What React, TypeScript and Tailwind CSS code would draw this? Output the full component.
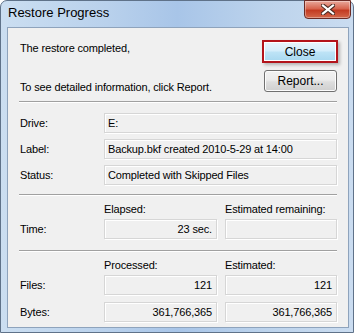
import type { ReactNode } from "react";

function Field({ children, right }: { children?: ReactNode; right?: boolean }) {
  return (
    <div
      className={
        right
          ? "flex h-[20px] items-center justify-end border border-[#d6d6d6] bg-[#f0f0f0] px-[4px] shadow-[inset_1px_1px_0_#ffffff,1px_1px_0_#ffffff] text-black"
          : "flex h-[20px] items-center border border-[#d6d6d6] bg-[#f0f0f0] px-[3px] shadow-[inset_1px_1px_0_#ffffff,1px_1px_0_#ffffff] text-black"
      }
    >
      {children}
    </div>
  );
}

function Separator() {
  return <div className="-ml-[1px] h-[2px] border-t border-b border-t-[#a0a0a0] border-b-white" />;
}

export default function App() {
  return (
    <div className="h-[333px] w-[354px] overflow-hidden bg-white font-['Liberation_Sans',Arial,sans-serif]">
      <div className="flex h-[333px] w-[354px] flex-col rounded-t-[7px] border border-[#5f7289] bg-[linear-gradient(to_right,#cbdef1,#b9d1ec_30%,#a8c5e8_50%,#bcd3ec_75%,#cadcf0)]">
        {/* title bar */}
        <div className="flex h-[26px] items-start justify-between">
          <span className="pl-[7px] pt-[4px] text-[13px] leading-[16px] text-black">Restore Progress</span>
          <div className="mr-[2px] -mt-[1px] flex h-[19px] w-[47px] items-center justify-center rounded-b-[4px] border border-[#6b2b25] bg-[linear-gradient(to_bottom,#e9a99c,#d7654f_45%,#c33b22_55%,#d3674a)] shadow-[inset_0_0_0_1px_rgba(255,255,255,0.35)]">
            <svg width="14" height="11" viewBox="0 0 14 11">
              <path d="M2 1.5 L12 9.5 M12 1.5 L2 9.5" stroke="#4a2a22" strokeWidth="4.2" strokeLinecap="square" />
              <path d="M2 1.5 L12 9.5 M12 1.5 L2 9.5" stroke="#ffffff" strokeWidth="2.2" strokeLinecap="square" />
            </svg>
          </div>
        </div>

        {/* client */}
        <div className="ml-[6px] h-[301px] w-[342px] border border-[#8ea3bc] bg-[#f0f0f0] pl-[12px] pr-[11px] pt-[12px] text-[11px] leading-[14px] tracking-[-0.15px] text-black">
          <div className="flex h-[61px] justify-between">
            <div className="flex flex-col">
              <span className="mt-[1px]">The restore completed,</span>
              <span className="mt-[25px]">To see detailed information, click Report.</span>
            </div>
            <div className="flex w-[75px] flex-col items-end tracking-normal">
              <div className="-mr-[1px] flex h-[23px] w-[76px] items-center justify-center border-2 border-[#b3141b] bg-[linear-gradient(to_bottom,#e9f5fc,#d6eefb_45%,#bde3f6_55%,#a8d8f0)] shadow-[inset_0_0_0_1px_#ffffff,2px_2px_3px_rgba(0,0,0,0.25)] text-[12px]">
                Close
              </div>
              <div className="mt-[7px] flex h-[22px] w-[73px] items-center justify-center rounded-[3px] border border-[#707070] bg-[linear-gradient(to_bottom,#f2f2f2,#ebebeb_45%,#dddddd_55%,#cfcfcf)] shadow-[inset_0_0_0_1px_#fcfcfc] text-[12px]">
                Report...
              </div>
            </div>
          </div>

          <Separator />

          <div className="mt-[10px] flex flex-col gap-[6px]">
            {[
              ["Drive:", "E:"],
              ["Label:", "Backup.bkf created 2010-5-29 at 14:00"],
              ["Status:", "Completed with Skipped Files"],
            ].map(([label, value]) => (
              <div key={label} className="grid grid-cols-[84px_1fr] items-center">
                <span>{label}</span>
                <Field>{value}</Field>
              </div>
            ))}
          </div>

          <div className="mt-[9px]">
            <Separator />
          </div>

          <div className="mt-[6px] grid h-[14px] grid-cols-[76px_113px_112px] gap-x-[8px]">
            <span />
            <span>Elapsed:</span>
            <span>Estimated remaining:</span>
          </div>
          <div className="mt-[3px] grid grid-cols-[76px_113px_112px] items-center gap-x-[8px]">
            <span>Time:</span>
            <Field right>23 sec.</Field>
            <Field right />
          </div>

          <div className="mt-[11px]">
            <Separator />
          </div>

          <div className="mt-[6px] grid h-[14px] grid-cols-[76px_113px_112px] gap-x-[8px]">
            <span />
            <span>Processed:</span>
            <span>Estimated:</span>
          </div>
          <div className="mt-[3px] flex flex-col gap-[7px]">
            {[
              ["Files:", "121", "121"],
              ["Bytes:", "361,766,365", "361,766,365"],
            ].map(([label, a, b]) => (
              <div key={label} className="grid grid-cols-[76px_113px_112px] items-center gap-x-[8px]">
                <span>{label}</span>
                <Field right>{a}</Field>
                <Field right>{b}</Field>
              </div>
            ))}
          </div>
        </div>
      </div>
    </div>
  );
}
